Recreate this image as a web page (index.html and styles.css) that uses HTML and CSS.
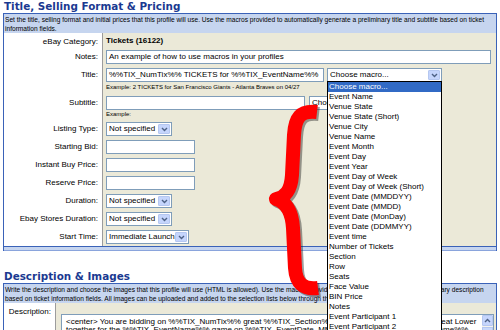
FILE: index.html
```html
<!DOCTYPE html>
<html lang="en">
<head>
    <meta charset="UTF-8">
    <title>Profile Editor - Title, Selling Format &amp; Pricing</title>
    <link rel="stylesheet" href="styles.css">
</head>
<body>
    <h2 class="section-title">Title, Selling Format &amp; Pricing</h2>
    <div class="panel">
        <div class="panel-help">Set the title, selling format and initial prices that this profile will use. Use the macros provided to automatically generate a preliminary title and subtitle based on ticket information fields.</div>
        <div class="form-grid">
            <div class="label">eBay Category:</div>
            <div class="field"><span class="static">Tickets (16122)</span></div>

            <div class="label">Notes:</div>
            <div class="field"><div class="input notes">An example of how to use macros in your profiles</div></div>

            <div class="label">Title:</div>
            <div class="field">
                <div class="line">
                    <div class="input title">%%TIX_NumTix%% TICKETS for %%TIX_EventName%%</div>
                    <div class="select macro">
                        <span class="value">Choose macro...</span>
                        <span class="arrow"><svg width="7" height="5" viewBox="0 0 7 5"><path d="M1 1l2.5 2.5L6 1" fill="none" stroke="#4d6185" stroke-width="1.4"/></svg></span>
                        <ul class="macro-list">
                            <li class="selected">Choose macro...</li>
                            <li>Event Name</li>
                            <li>Venue State</li>
                            <li>Venue State (Short)</li>
                            <li>Venue City</li>
                            <li>Venue Name</li>
                            <li>Event Month</li>
                            <li>Event Day</li>
                            <li>Event Year</li>
                            <li>Event Day of Week</li>
                            <li>Event Day of Week (Short)</li>
                            <li>Event Date (MMDDYY)</li>
                            <li>Event Date (MMDD)</li>
                            <li>Event Date (MonDay)</li>
                            <li>Event Date (DDMMYY)</li>
                            <li>Event time</li>
                            <li>Number of Tickets</li>
                            <li>Section</li>
                            <li>Row</li>
                            <li>Seats</li>
                            <li>Face Value</li>
                            <li>BIN Price</li>
                            <li>Notes</li>
                            <li>Event Participant 1</li>
                            <li>Event Participant 2</li>
                        </ul>
                    </div>
                </div>
                <div class="example">Example: 2 TICKETS for San Francisco Giants - Atlanta Braves on 04/27</div>
            </div>

            <div class="label">Subtitle:</div>
            <div class="field">
                <div class="line wide-gap">
                    <div class="input subtitle"></div>
                    <div class="select macro">
                        <span class="value">Choose macro...</span>
                        <span class="arrow"><svg width="7" height="5" viewBox="0 0 7 5"><path d="M1 1l2.5 2.5L6 1" fill="none" stroke="#4d6185" stroke-width="1.4"/></svg></span>
                    </div>
                </div>
                <div class="example short">Example:</div>
            </div>

            <div class="label">Listing Type:</div>
            <div class="field">
                <div class="select small">
                    <span class="value">Not specified</span>
                    <span class="arrow"><svg width="7" height="5" viewBox="0 0 7 5"><path d="M1 1l2.5 2.5L6 1" fill="none" stroke="#4d6185" stroke-width="1.4"/></svg></span>
                </div>
            </div>

            <div class="label">Starting Bid:</div>
            <div class="field"><div class="input price"></div></div>

            <div class="label">Instant Buy Price:</div>
            <div class="field"><div class="input price"></div></div>

            <div class="label">Reserve Price:</div>
            <div class="field"><div class="input price"></div></div>

            <div class="label">Duration:</div>
            <div class="field">
                <div class="select small">
                    <span class="value">Not specified</span>
                    <span class="arrow"><svg width="7" height="5" viewBox="0 0 7 5"><path d="M1 1l2.5 2.5L6 1" fill="none" stroke="#4d6185" stroke-width="1.4"/></svg></span>
                </div>
            </div>

            <div class="label">Ebay Stores Duration:</div>
            <div class="field">
                <div class="select small">
                    <span class="value">Not specified</span>
                    <span class="arrow"><svg width="7" height="5" viewBox="0 0 7 5"><path d="M1 1l2.5 2.5L6 1" fill="none" stroke="#4d6185" stroke-width="1.4"/></svg></span>
                </div>
            </div>

            <div class="label">Start Time:</div>
            <div class="field">
                <div class="select launch">
                    <span class="value">Immediate Launch</span>
                    <span class="arrow"><svg width="7" height="5" viewBox="0 0 7 5"><path d="M1 1l2.5 2.5L6 1" fill="none" stroke="#4d6185" stroke-width="1.4"/></svg></span>
                </div>
            </div>
        </div>
        <div class="panel-foot"></div>
    </div>

    <h2 class="section-title second">Description &amp; Images</h2>
    <div class="panel">
        <div class="panel-help">Write the description and choose the images that this profile will use (HTML is allowed). Use the macros provided to automatically generate a preliminary description based on ticket information fields. All images can be uploaded and added to the selection lists below through the Image Manager.</div>
        <div class="form-grid desc-grid">
            <div class="label">Description:</div>
            <div class="field">
                <div class="textbox">
                    <div class="textbox-text">&lt;center&gt; You are bidding on %%TIX_NumTix%% great %%TIX_Section%% seats. These seats are the great Lower together for the %%TIX_EventName%% game on %%TIX_EventDate_MMDDYY%% at %%TIX_VenueName%%, for all fans.</div>
                    <div class="scrollbar">
                        <span class="scroll-up"><svg width="7" height="5" viewBox="0 0 7 5"><path d="M1 4l2.5-2.5L6 4" fill="none" stroke="#4d6185" stroke-width="1.4"/></svg></span>
                        <span class="scroll-thumb"></span>
                    </div>
                </div>
            </div>
        </div>
    </div>

    <!-- annotation pointing at the macro dropdown -->
    <svg class="brace" width="70" height="200" viewBox="0 0 70 200">
        <path class="brace-shadow" d="M55 12 C38 10 33 18 32 35 L30 75 C29 90 24 97 14 99 C24 102 30 112 31 128 L33 168 C34 183 41 190 56 188"/>
        <path class="brace-line" d="M55 12 C38 10 33 18 32 35 L30 75 C29 90 24 97 14 99 C24 102 30 112 31 128 L33 168 C34 183 41 190 56 188"/>
    </svg>
</body>
</html>
```

FILE: styles.css
```css
body {
    margin: 0;
    padding: 0;
    position: relative;
    background-color: #fff;
    font-family: "Liberation Sans", Arial, sans-serif;
    font-size: 8px;
    color: #000;
}

.section-title {
    margin: 0;
    padding-left: 4px;
    font-family: "DejaVu Sans", Verdana, sans-serif;
    font-size: 10.4px;
    line-height: 13px;
    font-weight: bold;
    color: #1a3991;
}

.section-title.second {
    margin-top: 19px;
}

.panel {
    margin: 0 3px;
    border: 1px solid #3a62b8;
    border-bottom: none;
}

.panel-help {
    min-height: 18px;
    padding: 1px 2px 0 1px;
    background-color: #c6d5ef;
    font-size: 6.6px;
    line-height: 9px;
}

.form-grid {
    display: grid;
    grid-template-columns: 99px 1fr;
}

.label {
    padding: 3px 4px 0 0;
    border-right: 1px solid #9c9c9c;
    background-color: #fff;
    text-align: right;
    line-height: 12px;
    white-space: nowrap;
}

.field {
    padding: 2px 0 2px 3px;
    background-color: #ebe9d8;
}

.static {
    display: block;
    font-weight: bold;
    line-height: 11px;
}

.line {
    display: flex;
    gap: 3px;
}

.line.wide-gap {
    gap: 4px;
}

.input {
    box-sizing: border-box;
    height: 14px;
    padding: 0 2px;
    border: 1px solid #7f9db9;
    background-color: #fff;
    line-height: 12px;
    white-space: nowrap;
    overflow: hidden;
}

.input.notes { width: 385px; }
.input.title { width: 218px; }
.input.subtitle { width: 199px; }
.input.price { width: 89px; }

.select {
    position: relative;
    box-sizing: border-box;
    display: flex;
    align-items: center;
    height: 14px;
    border: 1px solid #7f9db9;
    background-color: #fff;
}

.select.macro { width: 115px; }
.select.small { width: 66px; }
.select.launch { width: 83px; }

.select .value {
    flex: 1;
    padding-left: 2px;
    line-height: 12px;
    white-space: nowrap;
    overflow: hidden;
}

.select .arrow {
    box-sizing: border-box;
    display: flex;
    align-items: center;
    justify-content: center;
    width: 12px;
    height: 10px;
    margin-right: 1px;
    border: 1px solid #b5c7f0;
    border-radius: 1px;
    background-color: #c5d5fc;
}

.example {
    font-size: 6px;
    line-height: 10px;
}

.example.short {
    line-height: 8px;
}

.macro-list {
    position: absolute;
    top: 100%;
    left: -1px;
    z-index: 10;
    box-sizing: border-box;
    width: 115px;
    margin: 0;
    padding: 0;
    list-style: none;
    border: 1px solid #000;
    background-color: #fff;
}

.macro-list li {
    padding-left: 1px;
    line-height: 10px;
    white-space: nowrap;
}

.macro-list li.selected {
    background-color: #316ac5;
    color: #fff;
}

.panel-foot {
    height: 3px;
    border-top: 1px solid #3a62b8;
    border-bottom: 1px solid #8aa4dc;
    background-color: #c6d5ef;
}

.desc-grid {
    grid-template-columns: 52px 1fr;
}

.desc-grid .label {
    padding-top: 4px;
    line-height: 10px;
}

.desc-grid .field {
    padding: 11px 2px 0 5px;
}

.textbox {
    display: flex;
    height: 40px;
    border: 1px solid #7f9db9;
    background-color: #fff;
}

.textbox-text {
    flex: 1;
    padding: 3px 1px 3px 4px;
    line-height: 8px;
}

.scrollbar {
    display: flex;
    flex-direction: column;
    width: 11px;
    background-color: #f4f3ee;
}

.scroll-up {
    box-sizing: border-box;
    display: flex;
    align-items: center;
    justify-content: center;
    height: 11px;
    border: 1px solid #b5c7f0;
    border-radius: 1px;
    background-color: #c5d5fc;
}

.scroll-thumb {
    height: 20px;
    margin-top: 1px;
    border: 1px solid #b5c7f0;
    background-color: #c9d8fb;
}

.brace {
    position: absolute;
    left: 262px;
    top: 100px;
    z-index: 5;
}

.brace path {
    fill: none;
    stroke-width: 14;
    stroke-linejoin: round;
}

.brace-line {
    stroke: #ff0000;
}

.brace-shadow {
    stroke: rgba(40, 40, 40, 0.45);
    transform: translate(2px, 2px);
}
```
